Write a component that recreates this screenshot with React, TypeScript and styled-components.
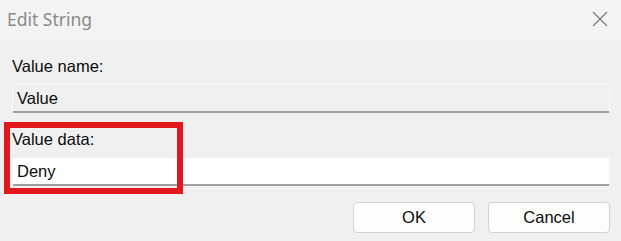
import React from 'react';
import styled, {createGlobalStyle} from "styled-components";

const GlobalStyle = createGlobalStyle`
    html, body {
        margin: 0;
        padding: 0;
        background: #f0f0f0;
    }
`

const CloseIcon = () => (
    <svg width="16" height="16" viewBox="0 0 16 16">
        <path d="M1 1 L15 15 M15 1 L1 15" stroke="#7a7a7a" strokeWidth="1.2" fill="none"/>
    </svg>
);

export default function App() {
    return (
        <Window>
            <GlobalStyle/>
            <TitleBar>
                <Title>Edit String</Title>
                <CloseButton><CloseIcon/></CloseButton>
            </TitleBar>
            <Body>
                <Label>Value name:</Label>
                <Field $readOnly>Value</Field>
                <Label $top={16}>Value data:</Label>
                <Field>Deny</Field>
                <Buttons>
                    <Button>OK</Button>
                    <Button>Cancel</Button>
                </Buttons>
            </Body>
            <Highlight/>
        </Window>
    );
}

const Window = styled.div`
    position: relative;
    width: 621px;
    height: 241px;
    background: #f0f0f0;
    overflow: hidden;
`

const TitleBar = styled.div`
    display: flex;
    align-items: center;
    justify-content: space-between;
    height: 40px;
    padding: 0 13px 3px 7px;
    box-sizing: border-box;
    background: #f3f3f3;
`

const Title = styled.span`
    font-family: "Noto Sans", "Open Sans", sans-serif;
    font-size: 17.5px;
    color: #8a8a8a;
`

const CloseButton = styled.span`
    display: flex;
    align-items: center;
`

const Body = styled.div`
    display: flex;
    flex-direction: column;
    padding: 16px 11px 0 11px;
    font-family: "Liberation Sans", Arial, sans-serif;
    font-size: 16.5px;
    color: #0c0c0c;
`

const Label = styled.div<{ $top?: number }>`
    line-height: 20px;
    margin-top: ${p => p.$top ?? 0}px;
    margin-bottom: 8px;
    padding-left: 1px;
`

const Field = styled.div<{ $readOnly?: boolean }>`
    height: 29px;
    display: flex;
    align-items: center;
    padding-left: 4px;
    margin-left: 1px;
    box-sizing: border-box;
    background: ${p => p.$readOnly ? "#efefef" : "#ffffff"};
    border: 1px solid ${p => p.$readOnly ? "#f8f8f8" : "#f4f4f4"};
    border-bottom: 2px solid #a0a0a0;
    border-radius: 2px;
`

const Buttons = styled.div`
    display: flex;
    justify-content: flex-end;
    gap: 13px;
    margin-top: 16px;
`

const Button = styled.button`
    width: 122px;
    height: 31px;
    background: #fdfdfd;
    border: 1px solid #d2d2d2;
    border-radius: 4px;
    font-family: "Liberation Sans", Arial, sans-serif;
    font-size: 16.5px;
    color: #0c0c0c;
`

const Highlight = styled.div`
    position: absolute;
    left: 4px;
    top: 122px;
    width: 179px;
    height: 72px;
    box-sizing: border-box;
    border: 6px solid #e3171e;
`
